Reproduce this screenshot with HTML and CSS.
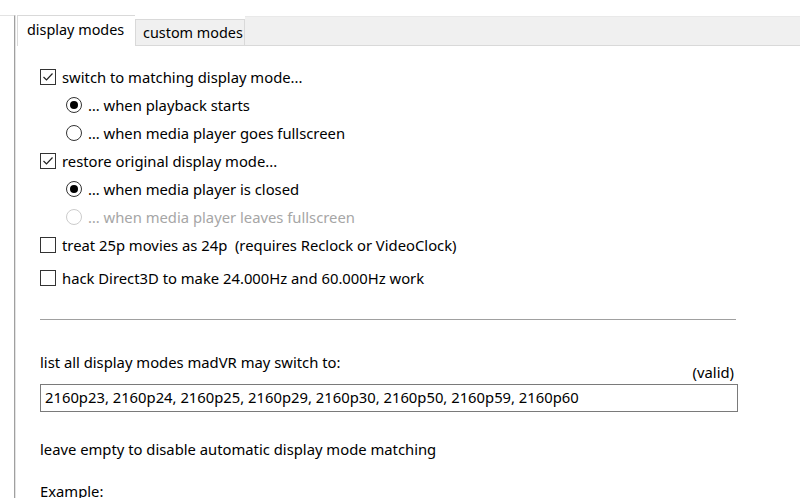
FILE: index.html
```html
<!DOCTYPE html>
<html>
<head>
<meta charset="utf-8">
<link rel="stylesheet" href="styles.css">
</head>
<body>
<div class="window">
  <div class="side"></div>
  <div class="tabctl">
    <div class="tabstrip">
      <div class="tab active">display modes</div>
      <div class="tab">custom modes</div>
      <div class="strip-rest"></div>
    </div>
    <div class="page">
      <div class="row"><span class="cb checked"><svg viewBox="0 0 16 16" width="16" height="16"><path d="M3.5 8 L6.5 11 L12.5 4.5" fill="none" stroke="#222" stroke-width="1.2"/></svg></span><span>switch to matching display mode...</span></div>
      <div class="row sub"><span class="rb on"></span><span>… when playback starts</span></div>
      <div class="row sub"><span class="rb"></span><span>… when media player goes fullscreen</span></div>
      <div class="row"><span class="cb checked"><svg viewBox="0 0 16 16" width="16" height="16"><path d="M3.5 8 L6.5 11 L12.5 4.5" fill="none" stroke="#222" stroke-width="1.2"/></svg></span><span>restore original display mode...</span></div>
      <div class="row sub"><span class="rb on"></span><span>… when media player is closed</span></div>
      <div class="row sub disabled"><span class="rb"></span><span>… when media player leaves fullscreen</span></div>
      <div class="row"><span class="cb"></span><span>treat 25p movies as 24p&nbsp; (requires Reclock or VideoClock)</span></div>
      <div class="row gap"><span class="cb"></span><span>hack Direct3D to make 24.000Hz and 60.000Hz work</span></div>
      <div class="sep"></div>
      <div class="label">list all display modes madVR may switch to:</div>
      <div class="valid">(valid)</div>
      <div class="input">2160p23, 2160p24, 2160p25, 2160p29, 2160p30, 2160p50, 2160p59, 2160p60</div>
      <div class="note">leave empty to disable automatic display mode matching</div>
      <div class="note ex">Example:</div>
    </div>
  </div>
</div>
</body>
</html>
```
FILE: styles.css
```css
* { box-sizing: border-box; }
html, body { margin: 0; padding: 0; background: #fff; }
body {
  font-family: "Noto Sans", "Open Sans", sans-serif;
  font-size: 14.8px;
  color: #000;
  width: 800px;
  height: 498px;
  overflow: hidden;
}
.window { display: flex; height: 498px; padding-top: 15px; }
.side {
  width: 15px;
  flex: none;
  border-top: 1px solid #e3e3e3;
  border-right: 1px solid #a0a0a0;
  box-shadow: 1px 0 0 #e3e3e3;
}
.tabctl { flex: 1; display: flex; flex-direction: column; padding-left: 2px; }
.tabstrip { display: flex; height: 31px; align-items: flex-end; }
.tab {
  height: 27px;
  padding: 0 0 0 7px;
  line-height: 25px;
  background: #f0f0f0;
  border: 1px solid #d9d9d9;
  white-space: nowrap;
  font-size: 14.4px;
  flex: none;
}
.tab.active {
  height: 31px;
  width: 118px;
  padding-left: 9px;
  line-height: 28px;
  background: #fff;
  border-bottom: none;
  border-right: none;
}
.tab:not(.active) { width: 110px; }
.strip-rest {
  flex: 1;
  height: 30px;
  background: #f0f0f0;
  border-top: 1px solid #e9e9e9;
  border-bottom: 1px solid #d9d9d9;
}
.page { padding: 17px 0 0 23px; display: flex; flex-direction: column; }
.row { display: flex; align-items: center; height: 28px; gap: 6px; white-space: nowrap; }
.row.sub { padding-left: 26px; }
.row.gap { margin-top: 5px; }
.row.disabled { color: #a6a6a6; }
.cb {
  width: 16px; height: 16px; flex: none;
  border: 1px solid #333;
  background: #fff;
  display: inline-flex;
}
.cb svg { margin: -1px; }
.rb {
  width: 16px; height: 16px; flex: none;
  border: 1px solid #333;
  border-radius: 50%;
  background: #fff;
  display: inline-flex;
  align-items: center;
  justify-content: center;
}
.rb.on::after {
  content: "";
  width: 8px; height: 8px;
  border-radius: 50%;
  background: #000;
}
.disabled .rb { border-color: #cccccc; }
.sep {
  width: 696px;
  height: 2px;
  border-top: 1px solid #a0a0a0;
  border-bottom: 1px solid #fff;
  margin-top: 27px;
}
.label { margin-top: 32px; line-height: 18px; }
.valid { width: 694px; text-align: right; line-height: 18px; margin-top: -8px; }
.input {
  width: 698px;
  height: 28px;
  border: 1px solid #7a7a7a;
  padding: 0 4px;
  line-height: 25px;
  margin-top: 3px;
}
.note { margin-top: 28px; line-height: 18px; }
.note.ex { margin-top: 24px; }
```
